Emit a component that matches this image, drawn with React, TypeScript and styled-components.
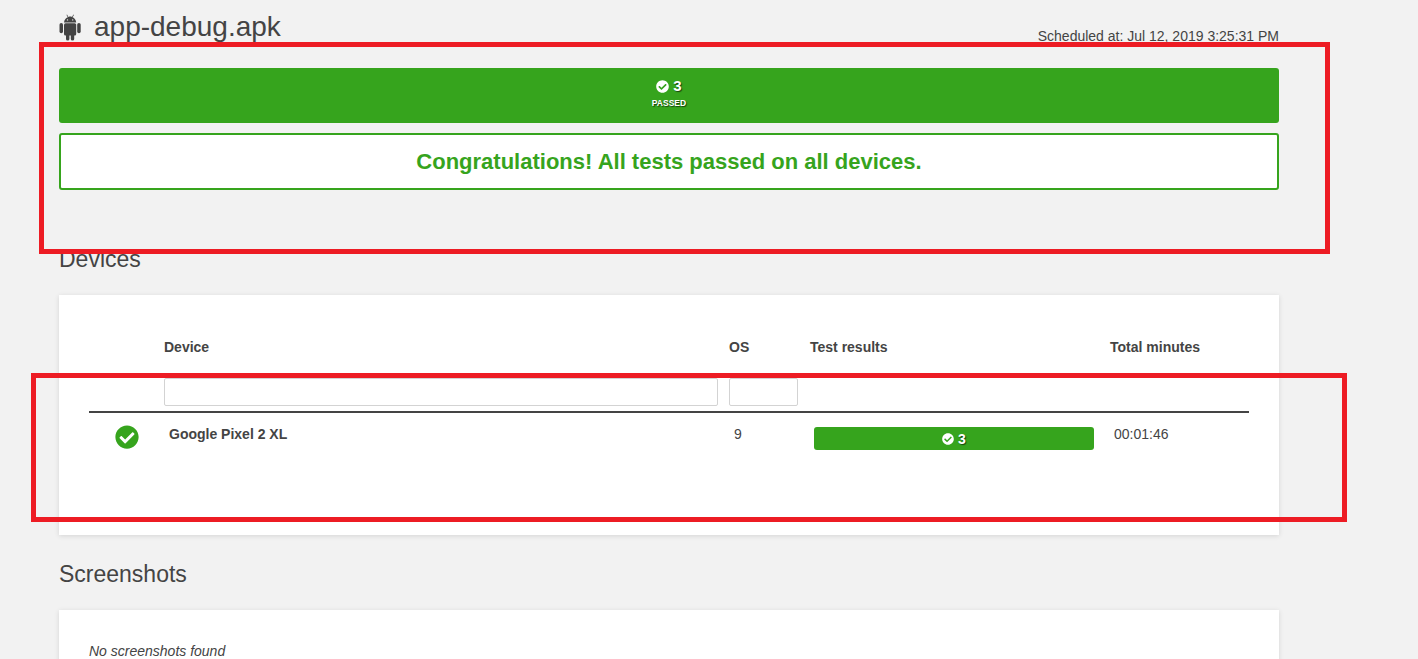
import React from 'react';
import styled, { createGlobalStyle } from 'styled-components';
import { FaCheckCircle } from 'react-icons/fa';

const GREEN = '#36a41d';
const TEXT = '#444444';

const GlobalStyle = createGlobalStyle`
  html, body {
    margin: 0;
    padding: 0;
    height: 659px;
    overflow: hidden;
    background: #f2f2f2;
    color: ${TEXT};
    font-family: "Liberation Sans", Arial, sans-serif;
  }
`;

const Page = styled.div`
  position: relative;
  width: 1220px;
  margin-left: 59px;
  padding-top: 11px;
`;

const TopRow = styled.header`
  display: flex;
  justify-content: space-between;
  height: 34px;
`;

const AppName = styled.div`
  display: flex;
  align-items: center;
  gap: 12px;
  height: 32px;
`;

const AppTitle = styled.h1`
  margin: 0;
  font-size: 28px;
  font-weight: 400;
  line-height: 32px;
`;

const Scheduled = styled.div`
  padding-top: 17px;
  font-size: 14px;
  line-height: 16px;
`;

const PassedBar = styled.div`
  display: flex;
  flex-direction: column;
  align-items: center;
  height: 55px;
  margin-top: 23px;
  padding-top: 10px;
  box-sizing: border-box;
  background: ${GREEN};
  border-radius: 3px;
  color: #fff;
  text-shadow: 1px 1px 1px rgba(0, 0, 0, 0.6);
`;

const Count = styled.div<{ $size: number }>`
  display: flex;
  align-items: center;
  gap: 4px;
  font-size: ${(p) => p.$size}px;
  font-weight: 700;
  line-height: 16px;
`;

const PassedLabel = styled.div`
  margin-top: 4px;
  font-size: 8.5px;
  font-weight: 700;
  line-height: 10px;
`;

const Banner = styled.div`
  display: flex;
  align-items: center;
  justify-content: center;
  height: 57px;
  margin-top: 10px;
  box-sizing: border-box;
  background: #fff;
  border: 2px solid ${GREEN};
  border-radius: 3px;
  color: ${GREEN};
  font-size: 22px;
  font-weight: 700;
`;

const SectionTitle = styled.h2<{ $top: number }>`
  margin: ${(p) => p.$top}px 0 0;
  font-size: 23px;
  font-weight: 400;
  line-height: 26px;
`;

const Card = styled.section<{ $top: number }>`
  margin-top: ${(p) => p.$top}px;
  padding: 30px;
  background: #fff;
  box-shadow: 0 1px 5px rgba(0, 0, 0, 0.12);
`;

const DeviceCard = styled(Card)`
  height: 240px;
  box-sizing: border-box;
`;

const HeadGrid = styled.div`
  display: grid;
  grid-template-columns: 75px 565px 81px 300px 1fr;
  border-bottom: 2px solid ${TEXT};
  height: 86px;
`;

const HeadCell = styled.div`
  display: flex;
  flex-direction: column;
  font-size: 14px;
  font-weight: 700;
  line-height: 15px;
  padding-top: 15px;
`;

const FilterInput = styled.input`
  display: block;
  height: 28px;
  box-sizing: border-box;
  margin-top: 23px;
  background: #fff;
  border: 1px solid #d3d3d3;
  border-radius: 2px;
  outline: none;
`;

const DeviceFilter = styled(FilterInput)`
  width: 554px;
`;

const OsFilter = styled(FilterInput)`
  width: 69px;
`;

const BodyGrid = styled.div`
  display: grid;
  grid-template-columns: 75px 565px 81px 300px 1fr;
  padding-top: 12px;
  font-size: 14px;
  line-height: 16px;
`;

const StatusCell = styled.div`
  display: flex;
  padding-left: 26px;
  color: ${GREEN};
  font-size: 24px;
  line-height: 24px;
`;

const BodyCell = styled.div<{ $bold?: boolean }>`
  padding: 1px 0 0 5px;
  font-weight: ${(p) => (p.$bold ? 700 : 400)};
`;

const TimeCell = styled(BodyCell)`
  padding-left: 4px;
`;

const ResultsCell = styled.div`
  padding: 2px 0 0 4px;
`;

const ResultBar = styled.div`
  display: flex;
  align-items: center;
  justify-content: center;
  width: 280px;
  height: 23px;
  background: ${GREEN};
  border-radius: 3px;
  color: #fff;
  text-shadow: 1px 1px 1px rgba(0, 0, 0, 0.6);
`;

const EmptyNote = styled.em`
  display: block;
  font-size: 14px;
  line-height: 16px;
  padding-top: 3px;
`;

const Annotation = styled.div<{ $left: number; $top: number; $width: number; $height: number }>`
  position: absolute;
  left: ${(p) => p.$left - 59}px;
  top: ${(p) => p.$top}px;
  width: ${(p) => p.$width}px;
  height: ${(p) => p.$height}px;
  box-sizing: border-box;
  border: 5px solid #ed1c24;
  pointer-events: none;
`;

const AndroidIcon = () => (
  <svg width="23" height="28" viewBox="1 0 23 28" fill="#444444" aria-hidden="true">
    <path d="M6 9.4C6.2 6.900 7.700 5.100 9.800 4.200L8.500 1.900 9 1.600 10.400 3.900C11.600 3.500 12.800 3.500 14 3.900L15.400 1.600 15.900 1.900 14.600 4.200C16.500 5.100 18 6.900 18.200 9.400Z" />
    <rect x="6" y="10.300" width="12.200" height="12.300" rx="1.500" />
    <rect x="1.500" y="10" width="3.500" height="10.200" rx="1.750" />
    <rect x="19.200" y="10" width="3.500" height="10.200" rx="1.750" />
    <rect x="8" y="20" width="3.400" height="7.600" rx="1.700" />
    <rect x="12.800" y="20" width="3.400" height="7.600" rx="1.700" />
    <circle cx="9.500" cy="6.900" r="0.700" fill="#f2f2f2" />
    <circle cx="14.700" cy="6.900" r="0.700" fill="#f2f2f2" />
  </svg>
);

const App: React.FC = () => (
  <>
    <GlobalStyle />
    <Page>
      <TopRow>
        <AppName>
          <AndroidIcon />
          <AppTitle>app-debug.apk</AppTitle>
        </AppName>
        <Scheduled>Scheduled at: Jul 12, 2019 3:25:31 PM</Scheduled>
      </TopRow>

      <PassedBar>
        <Count $size={15}>
          <FaCheckCircle size={13} />3
        </Count>
        <PassedLabel>PASSED</PassedLabel>
      </PassedBar>
      <Banner>Congratulations! All tests passed on all devices.</Banner>

      <SectionTitle $top={56}>Devices</SectionTitle>
      <DeviceCard $top={23}>
        <HeadGrid>
          <div />
          <HeadCell>
            Device
            <DeviceFilter />
          </HeadCell>
          <HeadCell>
            OS
            <OsFilter />
          </HeadCell>
          <HeadCell>Test results</HeadCell>
          <HeadCell>Total minutes</HeadCell>
        </HeadGrid>
        <BodyGrid>
          <StatusCell>
            <FaCheckCircle />
          </StatusCell>
          <BodyCell $bold>Google Pixel 2 XL</BodyCell>
          <BodyCell>9</BodyCell>
          <ResultsCell>
            <ResultBar>
              <Count $size={14}>
                <FaCheckCircle size={12} />3
              </Count>
            </ResultBar>
          </ResultsCell>
          <TimeCell>00:01:46</TimeCell>
        </BodyGrid>
      </DeviceCard>

      <SectionTitle $top={26}>Screenshots</SectionTitle>
      <Card $top={23}>
        <EmptyNote>No screenshots found</EmptyNote>
      </Card>

      <Annotation $left={39} $top={42} $width={1291} $height={212} />
      <Annotation $left={31} $top={373} $width={1316} $height={149} />
    </Page>
  </>
);

export default App;
